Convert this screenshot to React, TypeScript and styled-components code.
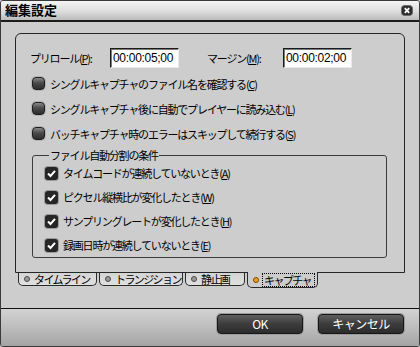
import React, { FC } from "react";
import styled, { createGlobalStyle } from "styled-components";

const GlobalStyle = createGlobalStyle`
  html, body {
    margin: 0;
    padding: 0;
    background: #cdcdcd;
  }
  * {
    box-sizing: border-box;
  }
`;

const jp = `"Noto Sans CJK JP", "Liberation Sans", sans-serif`;

const Window = styled.div`
  width: 420px;
  height: 347px;
  display: flex;
  flex-direction: column;
  border: 1px solid #3a3a3a;
  border-radius: 3px;
  overflow: hidden;
  font-family: ${jp};
  font-size: 11px;
  letter-spacing: -1.2px;
  color: #000;
`;

const TitleBar = styled.div`
  height: 21px;
  flex: none;
  display: flex;
  align-items: center;
  justify-content: space-between;
  padding: 0 6px 1px 4px;
  background: linear-gradient(#f4f4f4, #dcdcdc 55%, #bcbcbc);
  border-bottom: 2px solid #1c1c1c;
`;

const Title = styled.div`
  font-size: 13px;
  font-weight: 700;
  letter-spacing: 0;
  line-height: 16px;
`;

const Body = styled.div`
  flex: none;
  background: #cdcdcd;
  padding: 11px 14px 19px 14px;
`;

const Panel = styled.div`
  height: 240px;
  border: 1px solid #262626;
  border-radius: 6px 6px 0 0;
  padding: 14px 14px 0 14px;
  background: #cdcdcd;
`;

const FieldRow = styled.div`
  display: flex;
  align-items: center;
  height: 20px;
`;

const FieldLabel = styled.label<{ $w: number; $ml?: number }>`
  width: ${(p) => p.$w}px;
  margin-left: ${(p) => p.$ml ?? 0}px;
  white-space: nowrap;
`;

const TimeInput = styled.div`
  width: 69px;
  height: 20px;
  background: #fff;
  border-top: 1px solid #1a1a1a;
  border-left: 1px solid #1a1a1a;
  border-right: 1px solid #e8e8e8;
  border-bottom: 1px solid #e8e8e8;
  box-shadow: inset 1px 1px 0 #7a7a7a;
  font-family: "Liberation Sans", sans-serif;
  font-size: 12px;
  letter-spacing: -0.3px;
  line-height: 18px;
  padding-left: 2px;
`;

const OptionList = styled.div`
  margin-top: 3px;
  margin-left: 2px;
`;

const OptionRow = styled.div<{ $h: number }>`
  display: flex;
  align-items: center;
  gap: 5px;
  height: ${(p) => p.$h}px;
  white-space: nowrap;
`;

const RadioKnob = styled.span`
  width: 13px;
  height: 13px;
  flex: none;
  border-radius: 4px;
  border: 1px solid #1e1e1e;
  background: linear-gradient(#8a8a8a, #4a4a4a 45%, #2e2e2e);
  box-shadow: 0 0 0 1px #b4b4b4;
`;

const CheckBox = styled.span`
  width: 13px;
  height: 13px;
  flex: none;
  border-radius: 3px;
  background: #262626;
  box-shadow: 0 0 0 1px #9a9a9a;
  display: flex;
  align-items: center;
  justify-content: center;
`;

const Group = styled.fieldset`
  margin: 3px 0 0 2px;
  width: 355px;
  border: 1px solid #3c3c3c;
  border-radius: 3px;
  padding: 0 0 0 12px;
  height: 109px;
`;

const Legend = styled.legend`
  padding: 0 1px;
  margin-left: 4px;
  line-height: 12px;
`;

const TabRow = styled.div`
  display: flex;
  gap: 2px;
  padding-left: 3px;
  height: 16px;
`;

const Tab = styled.div<{ $active?: boolean; $w: number }>`
  width: ${(p) => p.$w}px;
  flex: none;
  height: ${(p) => (p.$active ? 16 : 13)}px;
  margin-top: ${(p) => (p.$active ? -1 : 0)}px;
  display: flex;
  align-items: center;
  gap: 3px;
  padding-left: 5px;
  border: 1px solid #2a2a2a;
  border-top: none;
  border-radius: 0 0 5px 5px;
  background: ${(p) =>
    p.$active ? "#cdcdcd" : "linear-gradient(#d4d4d4, #e0e0e0)"};
  white-space: nowrap;
  line-height: 12px;
  letter-spacing: -1.6px;
`;

const TabDot = styled.span<{ $on?: boolean }>`
  width: 6px;
  height: 6px;
  flex: none;
  border-radius: 50%;
  background: ${(p) => (p.$on ? "#f0a020" : "#9a9a9a")};
  border: 1px solid ${(p) => (p.$on ? "#7a4a00" : "#4a4a4a")};
  margin-right: 1px;
`;

const FocusText = styled.span`
  outline: 1px dotted #000;
  outline-offset: 0;
  padding: 0 3px 0 1px;
`;

const Footer = styled.div`
  flex: 1;
  display: flex;
  justify-content: flex-end;
  gap: 15px;
  padding: 5px 15px 0 0;
  border-top: 1px solid #111;
  background: linear-gradient(#d2d2d2, #bdbdbd 50%, #a4a4a4);
`;

const Button = styled.button`
  width: 86px;
  height: 20px;
  border: 1px solid #161616;
  border-radius: 4px;
  background: linear-gradient(#5e5e5e, #3c3c3c 50%, #2c2c2c);
  box-shadow: 0 0 0 1px #9c9c9c;
  color: #fff;
  font-family: ${jp};
  font-size: 12px;
  letter-spacing: -0.5px;
  padding: 0;
  line-height: 16px;
`;

const CloseIcon: FC = () => (
  <svg width="12" height="11" viewBox="0 0 12 11">
    <rect x="0.5" y="0.5" width="11" height="10" rx="3" fill="#2c2c2c" stroke="#6a6a6a" />
    <path d="M3.8 3.2 L8.2 7.8 M8.2 3.2 L3.8 7.8" stroke="#fff" strokeWidth="1.8" />
  </svg>
);

const CheckMark: FC = () => (
  <svg width="11" height="11" viewBox="0 0 11 11">
    <path d="M2 5.5 L4.5 8 L9 2.8" stroke="#fff" strokeWidth="2" fill="none" />
  </svg>
);

const K: FC<{ k: string }> = ({ k }) => (
  <>
    (<u>{k}</u>)
  </>
);

const radios = [
  { text: "シングルキャプチャのファイル名を確認する", key: "C" },
  { text: "シングルキャプチャ後に自動でプレイヤーに読み込む", key: "L" },
  { text: "バッチキャプチャ時のエラーはスキップして続行する", key: "S" },
];

const checks = [
  { text: "タイムコードが連続していないとき", key: "A" },
  { text: "ピクセル縦横比が変化したとき", key: "W" },
  { text: "サンプリングレートが変化したとき", key: "H" },
  { text: "録画日時が連続していないとき", key: "E" },
];

const tabs = [
  { text: "タイムライン", w: 79 },
  { text: "トランジション", w: 84 },
  { text: "静止画", w: 60 },
];

const App: FC = () => (
  <>
    <GlobalStyle />
    <Window>
      <TitleBar>
        <Title>編集設定</Title>
        <CloseIcon />
      </TitleBar>
      <Body>
        <Panel>
          <FieldRow>
            <FieldLabel $w={80}>
              プリロール<K k="P" />:
            </FieldLabel>
            <TimeInput>00:00:05;00</TimeInput>
            <FieldLabel $w={76} $ml={28}>
              マージン<K k="M" />:
            </FieldLabel>
            <TimeInput>00:00:02;00</TimeInput>
          </FieldRow>
          <OptionList>
            {radios.map((r) => (
              <OptionRow key={r.key} $h={25}>
                <RadioKnob />
                <span>
                  {r.text}
                  <K k={r.key} />
                </span>
              </OptionRow>
            ))}
          </OptionList>
          <Group>
            <Legend>ファイル自動分割の条件</Legend>
            {checks.map((c) => (
              <OptionRow key={c.key} $h={24}>
                <CheckBox>
                  <CheckMark />
                </CheckBox>
                <span>
                  {c.text}
                  <K k={c.key} />
                </span>
              </OptionRow>
            ))}
          </Group>
        </Panel>
        <TabRow>
          {tabs.map((t) => (
            <Tab key={t.text} $w={t.w}>
              <TabDot />
              {t.text}
            </Tab>
          ))}
          <Tab $active $w={71}>
            <TabDot $on />
            <FocusText>キャプチャ</FocusText>
          </Tab>
        </TabRow>
      </Body>
      <Footer>
        <Button>OK</Button>
        <Button>キャンセル</Button>
      </Footer>
    </Window>
  </>
);

export default App;
